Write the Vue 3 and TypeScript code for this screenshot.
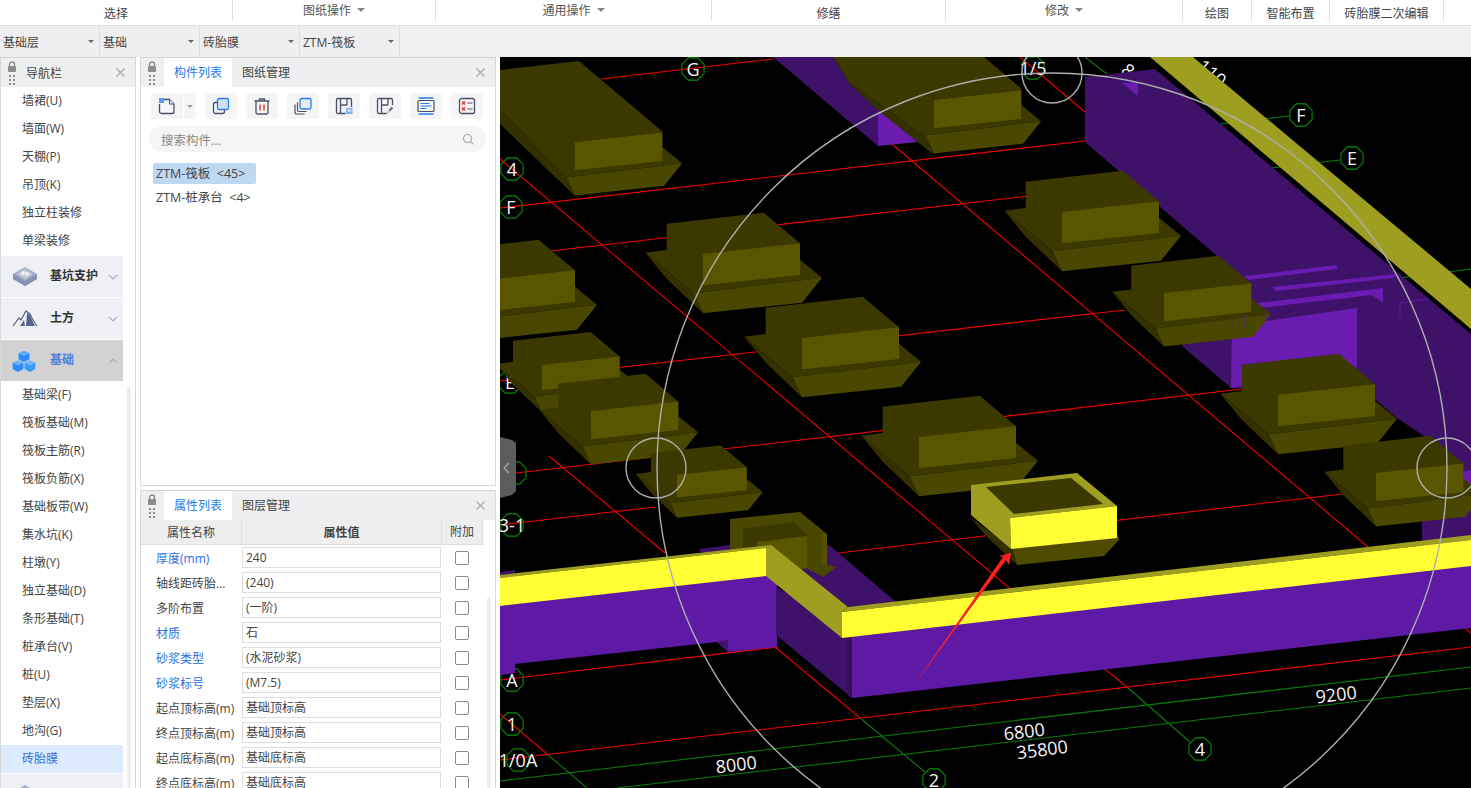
<script setup lang="ts">
type Pt = [number, number]
interface Poly { points: string; fill: string }

const toStr = (p: Pt[]) => p.map(([x, y]) => `${x.toFixed(1)},${y.toFixed(1)}`).join(' ')
const poly = (fill: string, ...c: number[]): Poly => {
  const p: Pt[] = []
  for (let i = 0; i < c.length; i += 2) p.push([c[i], c[i + 1]])
  return { points: toStr(p), fill }
}

const TOP = '#3b3800'
const LEFT = '#343100'
const BLOCK = '#5a5600'
const BASE = '#4a4700'
const OLIVE = '#9e9e20'
const YEL = '#ffff33'
const PDARK = '#3e1268'
const PMAIN = '#5f1aa5'
const PBRIGHT = '#6a1cb0'

function footing(x: number, y: number, s: number): Poly[] {
  const t = (o: Pt[]) => toStr(o.map(([a, b]) => [x + a * s, y + b * s] as Pt))
  return [
    { fill: TOP, points: t([[-57.7, -1.3], [-36.3, -4], [-36.3, -30.3], [60.7, -41.3], [97, -10.7], [97, 5.7], [119, 23.7], [-9.3, 39.3]]) },
    { fill: LEFT, points: t([[-57.7, -1.3], [-9.3, 39.3], [0, 59.3], [-36, 25]]) },
    { fill: BASE, points: t([[-9.3, 39.3], [119, 23.7], [99, 48.7], [0, 59.3]]) },
    { fill: BLOCK, points: t([[0, 0], [97, -10.7], [97, 21], [0, 31.3]]) },
  ]
}

const redLines: number[][] = [
  [601, 79, 773, 59], [500, 208, 1085, 141], [550, 251, 1090, 189], [500, 381, 1125, 310],
  [516, 473, 1242, 389], [500, 525, 655, 507], [830, 554, 1342, 494], [500, 680, 778, 647],
  [500, 760, 1471, 647], [500, 159, 1020, 597], [1105, 669, 1127, 687], [549, 456, 665, 553],
  [775, 647, 859, 717], [500, 714, 547, 754], [892, 144, 1368, 547], [1465, 628, 1471, 633],
  [1020, 57, 1085, 112],
]
const greenLines: number[][] = [
  [500, 781, 1471, 667], [617, 788, 1471, 688], [1127, 687, 1190, 742], [859, 717, 925, 772],
  [547, 754, 587, 788], [1085, 57, 1107, 74], [1220, 124, 1290, 116], [1272, 168, 1340, 160],
  [1400, 278, 1471, 269],
]

const octagon = (cx: number, cy: number, r: number) => {
  const p: Pt[] = []
  for (let i = 0; i < 8; i++) {
    const a = (Math.PI / 4) * i + Math.PI / 8
    p.push([cx + r * Math.cos(a), cy + r * Math.sin(a)])
  }
  return toStr(p)
}
const bubbles = [
  { x: 693, y: 69, t: 'G' }, { x: 512, y: 169, t: '4' }, { x: 511, y: 207, t: 'F' },
  { x: 510, y: 382, t: 'E' }, { x: 515, y: 473, t: '' }, { x: 1033, y: 68, t: '1/5' },
  { x: 1301, y: 115, t: 'F' }, { x: 1352, y: 158, t: 'E' }, { x: 512, y: 525, t: '3-1' },
  { x: 512, y: 680, t: 'A' }, { x: 512, y: 724, t: '1' }, { x: 518, y: 760, t: '1/0A' },
  { x: 934, y: 780, t: '2' }, { x: 1200, y: 749, t: '4' },
]
const dims = [
  { x: 737, y: 771, t: '8000', r: -7 }, { x: 1025, y: 738, t: '6800', r: -7 },
  { x: 1043, y: 756, t: '35800', r: -7 }, { x: 1337, y: 701, t: '9200', r: -7 },
  { x: 1120, y: 72, t: '81', r: 40 }, { x: 1196, y: 68, t: '110', r: 40 },
]

const scene: Poly[] = [
  // far wall
  poly(PDARK, 1085, 77, 1155, 69, 1471, 334, 1471, 570, 1422, 570, 1422, 495, 1424, 436, 1397, 418, 1370, 395, 1231, 388, 1182, 346, 1210, 300, 1217, 256, 1085, 142),
  poly(PBRIGHT, 1122, 83, 1138, 82, 1138, 96),
  poly(PBRIGHT, 1245, 276, 1337, 265, 1337, 269, 1248, 280),
  poly(PBRIGHT, 1272, 287, 1397, 274, 1393, 278, 1277, 291),
  poly(PBRIGHT, 1258, 303, 1383, 288, 1383, 303, 1372, 295, 1258, 308),
  poly(PBRIGHT, 1232, 326, 1357, 308, 1357, 368, 1231, 388),
  poly(PBRIGHT, 1422, 480, 1471, 470, 1471, 500, 1440, 490),
  // far beam
  poly(OLIVE, 1150, 57, 1193, 57, 1471, 289, 1471, 329),
  // upper purple
  poly(PDARK, 773, 57, 833, 57, 850, 84, 878, 109, 878, 146),
  poly(PBRIGHT, 878, 109, 918, 142, 878, 146),
  // long footings: footing first, its elongated top over it
  ...footing(575, 142, 0.9),
  poly(TOP, 500, 70, 579, 61, 663, 132, 575, 142, 575, 170, 567, 177, 500, 110),
  poly(LEFT, 500, 110, 567, 177, 575, 196, 500, 124),
  ...footing(934, 100, 0.9),
  poly(TOP, 833, 57, 984, 57, 1022, 89, 934, 100, 934, 128, 926, 136, 850, 84),
  poly(LEFT, 850, 84, 926, 136, 934, 155, 880, 112),
  ...footing(1062, 212, 1),
  ...footing(478, 281, 1),
  ...footing(703, 254, 1),
  ...footing(802, 338, 1),
  ...footing(1164, 293, 0.9),
  ...footing(542, 365, 0.8),
  ...footing(591, 411, 0.9),
  ...footing(1278, 395, 1),
  ...footing(919, 437, 1),
  ...footing(1376, 473, 0.9),
  ...footing(677, 475, 0.72),
  // near purple wall (left)
  poly(PDARK, 700, 549, 730, 545, 730, 552, 700, 552),
  poly(PDARK, 500, 572, 515, 570, 515, 578, 500, 578),
  poly(PDARK, 790, 540, 829, 545, 896, 602, 848, 607, 800, 570),
  // structure behind the wall
  poly(BASE, 730, 519, 800, 512, 827, 534, 827, 565, 836, 567, 823, 577, 806, 568, 770, 585, 757, 585, 730, 550),
  poly(TOP, 743, 529, 757, 527, 793, 522, 807, 534, 807, 540, 757, 548, 743, 552),
  poly('#555100', 822, 534, 827, 534, 827, 565, 822, 564),
  poly(BLOCK, 757, 542, 807, 536, 807, 568, 757, 575),
  poly(PMAIN, 500, 600, 777, 570, 777, 647, 728, 652, 717, 642, 515, 664, 515, 673, 500, 675),
  poly(PDARK, 717, 642, 728, 640, 728, 652),
  poly(PDARK, 776, 587, 852, 628, 852, 698, 776, 635),
  poly('#331058', 847, 640, 852, 640, 852, 698, 847, 694),
  poly(PMAIN, 852, 628, 1471, 560, 1471, 628, 852, 698),
  // near yellow wall
  poly(OLIVE, 500, 575, 771, 545, 766, 548, 500, 578),
  poly(YEL, 500, 578, 766, 548, 766, 576, 500, 606),
  poly(OLIVE, 771, 545, 848, 607, 842, 612, 842, 638, 766, 576, 766, 548),
  poly(OLIVE, 848, 607, 1471, 535, 1471, 540, 842, 612),
  poly(YEL, 842, 612, 1471, 540, 1471, 566, 842, 638),
  // selected piece
  poly(LEFT, 970, 517, 1011, 548, 1017, 565, 985, 535),
  poly('#4e4b00', 1011, 546, 1118, 535, 1119, 540, 1104, 556, 1017, 565),
  poly(OLIVE, 971, 485, 1077, 473, 1117, 506, 1010, 518, 1011, 549, 971, 515),
  poly(TOP, 986, 487, 1071, 478, 1103, 504, 1014, 514),
  poly(YEL, 1010, 518, 1117, 506, 1117, 538, 1011, 549),
  // arrow
  poly('#ff2020', 912, 688, 1003, 557, 999, 556, 1011, 553, 1009, 565, 1006, 560),
]

const topGroups = [
  { t: '选择', w: 233, down: false, low: true },
  { t: '图纸操作', w: 203, down: true, low: false },
  { t: '通用操作', w: 276, down: true, low: false },
  { t: '修缮', w: 234, down: false, low: true },
  { t: '修改', w: 237, down: true, low: false },
  { t: '绘图', w: 69, down: false, low: true },
  { t: '智能布置', w: 78, down: false, low: true },
  { t: '砖胎膜二次编辑', w: 114, down: false, low: true },
]
const selects = ['基础层', '基础', '砖胎膜', 'ZTM-筏板']
const navTop = ['墙裙(U)', '墙面(W)', '天棚(P)', '吊顶(K)', '独立柱装修', '单梁装修']
const navBottom = ['基础梁(F)', '筏板基础(M)', '筏板主筋(R)', '筏板负筋(X)', '基础板带(W)', '集水坑(K)', '柱墩(Y)', '独立基础(D)', '条形基础(T)', '桩承台(V)', '桩(U)', '垫层(X)', '地沟(G)']
const rows = [
  { k: '厚度(mm)', v: '240', link: true },
  { k: '轴线距砖胎...', v: '(240)', link: false },
  { k: '多阶布置', v: '(一阶)', link: false },
  { k: '材质', v: '石', link: true },
  { k: '砂浆类型', v: '(水泥砂浆)', link: true },
  { k: '砂浆标号', v: '(M7.5)', link: true },
  { k: '起点顶标高(m)', v: '基础顶标高', link: false },
  { k: '终点顶标高(m)', v: '基础顶标高', link: false },
  { k: '起点底标高(m)', v: '基础底标高', link: false },
  { k: '终点底标高(m)', v: '基础底标高', link: false },
]
const gripDots: Pt[] = [[0, 0], [4, 0], [0, 4], [4, 4], [0, 8], [4, 8]]
</script>

<template>
  <div class="app">
    <header class="ribbon">
      <div v-for="g in topGroups" :key="g.t" class="ribbon-group" :class="{ low: g.low }" :style="{ width: g.w + 'px' }">
        <span>{{ g.t }}</span><i v-if="g.down" class="caret" />
      </div>
    </header>
    <div class="selects">
      <div v-for="s in selects" :key="s" class="select"><span>{{ s }}</span><i class="caret dark" /></div>
    </div>
    <main class="main">
      <aside class="panel nav">
        <div class="panel-head">
          <svg class="grip" width="10" height="24" viewBox="0 0 10 24">
            <path d="M2.5 5V3.5a2.5 2.5 0 0 1 5 0V5" fill="none" stroke="#8c8c8c" stroke-width="1.4" />
            <rect x="1" y="5" width="8" height="6" rx="1" fill="#8c8c8c" />
            <rect v-for="(d, i) in gripDots" :key="i" :x="d[0] + 2" :y="d[1] + 14" width="2" height="2" fill="#8c8c8c" />
          </svg>
          <span class="nav-title">导航栏</span>
          <svg class="close" width="9" height="9" viewBox="0 0 9 9"><path d="M.5.5l8 8M8.5.5l-8 8" stroke="#aaa" stroke-width="1.100" /></svg>
        </div>
        <div class="nav-list">
          <div v-for="n in navTop" :key="n" class="nav-item">{{ n }}</div>
          <div class="nav-sec">
            <svg class="sec-icon" width="26" height="22" viewBox="0 0 26 22">
              <path d="M13 1 25 8v5l-12 7L1 13V8z" fill="#a6afc9" />
              <path d="M1 8l12 7 12-7v5l-12 7L1 13z" fill="#8792b0" />
              <path d="M13 3l8 5-8 5-8-5z" fill="#c5cbdc" />
              <circle cx="11" cy="7" r="2" fill="#eef0f5" /><circle cx="15" cy="8" r="2" fill="#eef0f5" />
            </svg>
            <b>基坑支护</b><svg class="chev" width="10" height="6" viewBox="0 0 10 6"><path d="M1 1l4 4 4-4" fill="none" stroke="#a9b1c7" stroke-width="1.2" /></svg>
          </div>
          <div class="nav-sec">
            <svg class="sec-icon" width="26" height="20" viewBox="0 0 26 20">
              <path d="M1 18 7 10l2 2 5-9 4 3 3 6 4 6" fill="none" stroke="#57628a" stroke-width="1.2" />
              <path d="M8 18l4-6 1 6zM14 18l1-13 3 2 2 5 3 6z" fill="#57628a" />
            </svg>
            <b>土方</b><svg class="chev" width="10" height="6" viewBox="0 0 10 6"><path d="M1 1l4 4 4-4" fill="none" stroke="#a9b1c7" stroke-width="1.2" /></svg>
          </div>
          <div class="nav-sec active">
            <svg class="sec-icon" width="24" height="23" viewBox="0 0 24 23">
              <path d="M12 1l5.500 2.500v6L12 12 6.500 9.500v-6z" fill="#2e8bf5" /><path d="M12 1l5.500 2.500L12 6 6.500 3.500z" fill="#5eaafa" />
              <path d="M6 10.500 11.500 13v6L6 22 .5 19v-6z" fill="#2e8bf5" /><path d="M6 10.500 11.500 13 6 15.500.5 13z" fill="#6cb4fb" />
              <path d="M18 10.500 23.500 13v6L18 22l-5.500-3v-6z" fill="#3f97f7" /><path d="M18 10.500 23.500 13 18 15.500 12.500 13z" fill="#6cb4fb" />
            </svg>
            <b>基础</b><svg class="chev" width="10" height="6" viewBox="0 0 10 6"><path d="M1 5l4-4 4 4" fill="none" stroke="#a9b1c7" stroke-width="1.2" /></svg>
          </div>
          <div v-for="n in navBottom" :key="n" class="nav-item">{{ n }}</div>
          <div class="nav-item current">砖胎膜</div>
          <div class="nav-sec">
            <svg class="sec-icon" width="26" height="22" viewBox="0 0 26 22"><path d="M13 1 25 8v5l-12 7L1 13V8z" fill="#a6afc9" /></svg>
          </div>
        </div>
        <div class="scroll-thumb nav-thumb" />
      </aside>

      <div class="mid">
        <section class="panel list-panel">
          <div class="panel-head">
            <svg class="grip" width="10" height="24" viewBox="0 0 10 24">
              <path d="M2.500 5V3.500a2.500 2.500 0 0 1 5 0V5" fill="none" stroke="#8c8c8c" stroke-width="1.4" />
              <rect x="1" y="5" width="8" height="6" rx="1" fill="#8c8c8c" />
              <rect v-for="(d, i) in gripDots" :key="i" :x="d[0] + 2" :y="d[1] + 14" width="2" height="2" fill="#8c8c8c" />
            </svg>
            <span class="tab active">构件列表</span><span class="tab">图纸管理</span>
            <svg class="close" width="9" height="9" viewBox="0 0 9 9"><path d="M.5.5l8 8M8.5.5l-8 8" stroke="#aaa" stroke-width="1.100" /></svg>
          </div>
          <div class="tools">
            <div class="tool split">
              <span class="tool-main">
                <svg width="18" height="18" viewBox="0 0 18 18">
                  <path d="M6 2.500h5.500l4.500 4.500v7.500a2 2 0 0 1-2 2H3.500a2 2 0 0 1-2-2V7" fill="none" stroke="#4a5068" stroke-width="1.300" />
                  <path d="M11.500 2.500v4.500H16" fill="#eef0f5" stroke="#4a5068" stroke-width="1" />
                  <rect x="1" y="1" width="5" height="5" fill="#5b9df0" />
                </svg>
              </span>
              <i class="caret dark small" />
            </div>
            <div class="tool">
              <svg width="18" height="18" viewBox="0 0 18 18">
                <rect x="1.500" y="5.500" width="11" height="11" rx="2" fill="none" stroke="#4a5068" stroke-width="1.300" />
                <rect x="5.500" y="1.500" width="11" height="11" rx="1.500" fill="#cfe0f7" stroke="#2b7de9" stroke-width="1.300" />
              </svg>
            </div>
            <div class="tool">
              <svg width="18" height="18" viewBox="0 0 18 18">
                <path d="M1.500 4h15M6.500 4V2h5v2" fill="none" stroke="#4a5068" stroke-width="1.300" />
                <path d="M3 4v11.500a1.500 1.500 0 0 0 1.500 1.500h9a1.500 1.500 0 0 0 1.500-1.500V4" fill="none" stroke="#4a5068" stroke-width="1.300" />
                <path d="M7 7.500v6M11 7.500v6" stroke="#e53030" stroke-width="1.400" />
              </svg>
            </div>
            <div class="tool">
              <svg width="18" height="18" viewBox="0 0 18 18">
                <path d="M1 7.500V15a2 2 0 0 0 2 2h7.500" fill="none" stroke="#4a5068" stroke-width="1.200" />
                <path d="M3.500 5.500V13a1.500 1.500 0 0 0 1.500 1.500h7.500" fill="none" stroke="#4a5068" stroke-width="1.200" />
                <rect x="6" y="1.500" width="11" height="10.500" rx="1.500" fill="#e2eefb" stroke="#2b7de9" stroke-width="1.300" />
              </svg>
            </div>
            <div class="tool">
              <svg width="18" height="18" viewBox="0 0 18 18">
                <path d="M10.500 16.500H3a1.500 1.500 0 0 1-1.500-1.500V3A1.500 1.500 0 0 1 3 1.500h12A1.500 1.500 0 0 1 16.500 3v7M5.500 1.500v15M5.500 8h6.500M12 1.500V8" fill="none" stroke="#4a5068" stroke-width="1.300" />
                <rect x="11" y="11" width="6.500" height="6" fill="#7eb3f2" /><rect x="12.500" y="12.500" width="3.500" height="2" fill="#e2eefb" />
              </svg>
            </div>
            <div class="tool">
              <svg width="18" height="18" viewBox="0 0 18 18">
                <path d="M10.500 16.500H3a1.500 1.500 0 0 1-1.500-1.500V3A1.500 1.500 0 0 1 3 1.500h12A1.500 1.500 0 0 1 16.500 3v5M5.500 1.500v15M5.500 8h6.500M12 1.500V8" fill="none" stroke="#4a5068" stroke-width="1.300" />
                <path d="M11 16.500l2.500-3" stroke="#b6cdea" stroke-width="2" /><path d="M13.500 13.500l3-3" stroke="#5d6375" stroke-width="2" />
              </svg>
            </div>
            <div class="tool">
              <svg width="18" height="18" viewBox="0 0 18 18">
                <path d="M1.500 1h15M1.500 17h15" stroke="#2b7de9" stroke-width="1.300" />
                <rect x="1" y="3.500" width="16" height="11" rx="1" fill="none" stroke="#4a5068" stroke-width="1.200" />
                <path d="M3.500 6.500h9M3.500 9h11M3.500 11.500h6" stroke="#2b7de9" stroke-width="1.100" />
              </svg>
            </div>
            <div class="tool">
              <svg width="18" height="18" viewBox="0 0 18 18">
                <rect x="1.500" y="1.500" width="15" height="15" rx="2" fill="none" stroke="#4a5068" stroke-width="1.300" />
                <path d="M4 4.500l3 3M7 4.500l-3 3M4 10.500l3 3M7 10.500l-3 3" stroke="#e53030" stroke-width="1.300" />
                <path d="M9.500 6h5M9.500 12h5" stroke="#4a5068" stroke-width="1.200" />
              </svg>
            </div>
          </div>
          <div class="search">
            <span>搜索构件...</span>
            <svg width="12" height="12" viewBox="0 0 12 12"><circle cx="5.500" cy="5.500" r="4" fill="none" stroke="#aaa" stroke-width="1.200" /><path d="M8.500 8.500l2.500 2.500" stroke="#aaa" stroke-width="1.200" /></svg>
          </div>
          <div class="comp selected">ZTM-筏板&nbsp; &lt;45&gt;</div>
          <div class="comp">ZTM-桩承台&nbsp; &lt;4&gt;</div>
        </section>

        <section class="panel prop-panel">
          <div class="panel-head">
            <svg class="grip" width="10" height="24" viewBox="0 0 10 24">
              <path d="M2.500 5V3.500a2.500 2.500 0 0 1 5 0V5" fill="none" stroke="#8c8c8c" stroke-width="1.4" />
              <rect x="1" y="5" width="8" height="6" rx="1" fill="#8c8c8c" />
              <rect v-for="(d, i) in gripDots" :key="i" :x="d[0] + 2" :y="d[1] + 14" width="2" height="2" fill="#8c8c8c" />
            </svg>
            <span class="tab active">属性列表</span><span class="tab">图层管理</span>
            <svg class="close" width="9" height="9" viewBox="0 0 9 9"><path d="M.5.5l8 8M8.5.5l-8 8" stroke="#aaa" stroke-width="1.100" /></svg>
          </div>
          <div class="thead">
            <div class="c1">属性名称</div><div class="c2">属性值</div><div class="c3">附加</div>
          </div>
          <div v-for="r in rows" :key="r.k" class="row">
            <div class="c1 label" :class="{ link: r.link }">{{ r.k }}</div>
            <div class="c2"><div class="value">{{ r.v }}</div></div>
            <div class="c3"><i class="check" /></div>
          </div>
          <div class="scroll-thumb prop-thumb" />
        </section>
      </div>

      <div class="view">
        <svg class="scene" viewBox="500 57 971 731" width="971" height="731">
          <rect x="500" y="57" width="971" height="731" fill="#000" />
          <text v-for="d in dims.slice(4)" :key="d.t" class="dim" :x="d.x" :y="d.y" :transform="`rotate(${d.r} ${d.x} ${d.y})`">{{ d.t }}</text>
          <line v-for="(l, i) in greenLines" :key="'g' + i" :x1="l[0]" :y1="l[1]" :x2="l[2]" :y2="l[3]" stroke="#0a7d0a" stroke-width="1.100" />
          <line v-for="(l, i) in redLines" :key="'r' + i" :x1="l[0]" :y1="l[1]" :x2="l[2]" :y2="l[3]" stroke="#f00000" stroke-width="1.100" />
          <g v-for="b in bubbles" :key="b.x + b.t">
            <polygon :points="octagon(b.x, b.y, 12)" fill="none" stroke="#0a8a0a" stroke-width="1.100" />
            <text class="bubble" :x="b.x" :y="b.y + 6.500" text-anchor="middle">{{ b.t }}</text>
          </g>
          <polygon v-for="(p, i) in scene" :key="i" :points="p.points" :fill="p.fill" />
          <path d="M1245 315v14M1266 313v43" stroke="#5f1aa5" fill="none" />
          <path d="M1400 317v-14l28-4" stroke="#5f1aa5" fill="none" />
          <g fill="none" stroke="#aeaeae" stroke-width="1.400">
            <circle cx="1052" cy="468" r="395" />
            <circle cx="1052" cy="73" r="30" />
            <circle cx="656" cy="468" r="30" />
            <circle cx="1447" cy="468" r="30" />
          </g>
          <text v-for="d in dims.slice(0, 4)" :key="d.t" class="dim" :x="d.x" :y="d.y" text-anchor="middle" :transform="`rotate(${d.r} ${d.x} ${d.y})`">{{ d.t }}</text>
          <polygon points="500,437 512,440 516,443 516,491 512,495 500,498" fill="#5c5c5c" />
          <path d="M509 463l-5 5 5 5" fill="none" stroke="#a8a8a8" stroke-width="1.200" />
        </svg>
      </div>
    </main>
  </div>
</template>

<style>
html, body { margin: 0; padding: 0; overflow: hidden; background: #fff; }
</style>

<style scoped>
.app {
  width: 1471px; height: 788px; overflow: hidden; display: flex; flex-direction: column;
  font-family: "Open Sans", "Noto Sans CJK SC", sans-serif; font-size: 12px; color: #333; background: #fff;
}
.ribbon { height: 25px; display: flex; align-items: flex-start; border-bottom: 1px solid #ddd; box-sizing: content-box; }
.ribbon-group {
  height: 21px; box-sizing: border-box; border-right: 1px solid #ddd; display: flex; align-items: center;
  justify-content: center; gap: 6px; font-size: 12px; color: #555; padding-bottom: 2px;
}
.ribbon-group.low { padding-bottom: 0; padding-top: 5px; color: #444; }
.caret { width: 0; height: 0; border: 4px solid transparent; border-top: 4px solid #888; border-bottom: 0; }
.caret.dark { border-top-color: #666; border-width: 3px 3px 0; }
.caret.small { border-top-color: #999; }
.selects { height: 31px; background: #f0f0f0; display: flex; }
.select {
  width: 100px; box-sizing: border-box; border-right: 1px solid #ddd; display: flex; align-items: center;
  justify-content: space-between; padding: 0 5px 0 3px; background: #efeff1; font-size: 12px; color: #444;
}
.main { flex: 1; min-height: 0; display: flex; }
.panel { border: 1px solid #d9d9d9; border-top-color: #d4d4d4; box-sizing: border-box; background: #fff; position: relative; overflow: hidden; }
.panel-head { height: 29px; background: #eeeff1; display: flex; align-items: stretch; position: relative; padding-left: 6px; flex: none; }
.grip { align-self: center; flex: none; }
.close { position: absolute; right: 10px; top: 10px; }
.nav { width: 136px; flex: none; margin-right: 4px; border-bottom: 0; }
.nav-title { margin-left: 9px; align-self: center; font-size: 12px; color: #444; }
.nav-list { width: 122px; }
.nav-item { height: 28px; line-height: 28px; padding-left: 21px; font-size: 12px; color: #444; }
.nav-item.current { background: #dcebfd; color: #3a70d8; }
.nav-sec {
  height: 41px; box-sizing: border-box; margin-top: 1px; background: #eef0f5; display: flex; align-items: center; position: relative; padding: 0 0 3px 49px; font-size: 12px;
}
.nav-sec b { color: #333; font-weight: 700; }
.nav-sec.active { background: #d2d2d2; }
.nav-sec.active b { color: #4f7fdc; }
.sec-icon { position: absolute; left: 11px; top: 10px; }
.chev { position: absolute; left: 107px; top: 18px; }
.scroll-thumb { position: absolute; width: 4px; background: #eeeeee; border-radius: 2px; }
.nav-thumb { left: 126px; top: 329px; bottom: 0; }
.mid { width: 356px; flex: none; margin-right: 4px; display: flex; flex-direction: column; gap: 4px; }
.list-panel { height: 429px; }
.prop-panel { flex: 1; min-height: 0; border-bottom: 0; }
.tab { width: 68px; text-align: center; line-height: 29px; font-size: 12px; color: #444; margin-left: 7px; }
.tab + .tab { margin-left: 0; }
.tab.active { background: #fff; color: #1b7bf0; }
.tools { display: flex; gap: 9px; padding: 6px 0 0 10px; }
.tool { width: 32px; height: 26px; background: #f5f5f6; border-radius: 3px; display: flex; align-items: center; justify-content: center; }
.tool.split { width: 45px; justify-content: flex-start; gap: 3px; }
.tool-main { width: 32px; height: 26px; border-right: 1px solid #fff; display: flex; align-items: center; justify-content: center; }
.search {
  margin: 7px 9px 0 8px; height: 26px; border-radius: 13px; background: #f5f5f5; display: flex; align-items: center;
  justify-content: space-between; padding: 0 12px; color: #888; font-size: 12.500px;
}
.comp { margin: 0 0 0 12px; height: 21px; line-height: 21px; padding: 0 3px; width: max-content; font-size: 12.500px; color: #444; margin-top: 3px; }
.comp.selected { margin-top: 11px; background: #bfd8f2; border-radius: 2px; width: 97px; white-space: nowrap; }
.thead { display: flex; width: 342px; height: 25px; background: #eee; border-bottom: 1px solid #ddd; box-sizing: border-box; line-height: 26px; font-size: 12px; color: #444; }
.thead .c1, .thead .c2, .thead .c3 { text-align: center; border-right: 1px solid #ddd; box-sizing: border-box; }
.thead .c2 { font-weight: 700; }
.c1 { width: 101px; flex: none; }
.c2 { width: 200px; flex: none; }
.c3 { width: 41px; flex: none; display: flex; align-items: center; justify-content: center; }
.row { display: flex; width: 342px; height: 25px; align-items: center; }
.row .c3 { padding-right: 1px; box-sizing: border-box; }
.label { padding-left: 15px; box-sizing: border-box; font-size: 12px; color: #444; white-space: nowrap; }
.label.link { color: #2b6fe0; }
.value { height: 21px; width: 199px; box-sizing: border-box; border: 1px solid #ddd; line-height: 19px; padding-left: 3px; font-size: 12px; color: #444; white-space: nowrap; }
.check { width: 14px; height: 14px; box-sizing: border-box; border: 1px solid #8a8a8a; border-radius: 2px; display: block; }
.prop-thumb { right: 4px; top: 106px; bottom: 0; }
.view { flex: 1; min-width: 0; overflow: hidden; background: #000; }
.scene { display: block; }
.dim { font-size: 18px; fill: #f4f4f4; font-family: "Open Sans", sans-serif; }
.bubble { font-size: 18px; fill: #f4f4f4; font-family: "Open Sans", sans-serif; }
</style>
